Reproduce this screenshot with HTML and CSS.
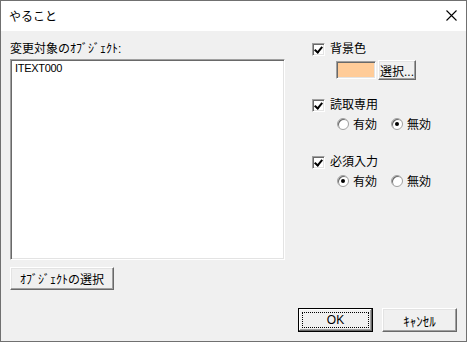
FILE: index.html
```html
<!DOCTYPE html>
<html lang="ja">
<head>
    <meta charset="UTF-8">
    <title>やること</title>
    <link rel="stylesheet" href="styles.css">
</head>
<body>
    <div class="window">
        <div class="titlebar">
            <span class="title">やること</span>
            <svg class="close" width="11" height="11" viewBox="0 0 11 11">
                <path d="M0.5 0.5 L10.5 10.5 M10.5 0.5 L0.5 10.5" stroke="#000" stroke-width="1.1" fill="none"/>
            </svg>
        </div>

        <div class="content">
            <div class="main">
                <!-- left: target objects -->
                <div class="left">
                    <div class="label">変更対象のｵﾌﾞｼﾞｪｸﾄ:</div>
                    <div class="listbox">
                        <div class="item">ITEXT000</div>
                    </div>
                    <button class="btn btn-select">ｵﾌﾞｼﾞｪｸﾄの選択</button>
                </div>

                <!-- right: options -->
                <div class="right">
                    <label class="check-row">
                        <span class="checkbox checked"></span>背景色
                    </label>
                    <div class="color-row">
                        <span class="swatch"></span>
                        <button class="btn btn-pick">選択...</button>
                    </div>

                    <label class="check-row row-gap1">
                        <span class="checkbox checked"></span>読取専用
                    </label>
                    <div class="radio-row">
                        <label class="radio-item"><span class="radio"></span>有効</label>
                        <label class="radio-item"><span class="radio on"></span>無効</label>
                    </div>

                    <label class="check-row row-gap2">
                        <span class="checkbox checked"></span>必須入力
                    </label>
                    <div class="radio-row">
                        <label class="radio-item"><span class="radio on"></span>有効</label>
                        <label class="radio-item"><span class="radio"></span>無効</label>
                    </div>
                </div>
            </div>

            <div class="footer">
                <button class="btn btn-ok"><span class="focus">OK</span></button>
                <button class="btn btn-cancel">ｷｬﾝｾﾙ</button>
            </div>
        </div>
    </div>
</body>
</html>
```

FILE: styles.css
```css
* {
    box-sizing: border-box;
}
body {
    margin: 0;
    font-family: "Liberation Sans", "Noto Sans CJK JP", sans-serif;
    font-size: 12px;
    color: #000;
    background: #fff;
}
.window {
    width: 467px;
    height: 342px;
    border: 1px solid #707070;
    display: flex;
    flex-direction: column;
}
.titlebar {
    height: 30px;
    background: #fff;
    display: flex;
    align-items: center;
    justify-content: space-between;
    padding: 0 9px 1px 8px;
}
.title {
    font-family: "Noto Sans CJK JP", sans-serif;
    font-size: 12px;
}
.close {
    display: block;
    margin-top: -1px;
}
.content {
    flex: 1;
    background: #f0f0f0;
    display: flex;
    flex-direction: column;
}
.main {
    display: flex;
    padding: 10px 0 0 9px;
}
.left {
    width: 275px;
}
.label {
    height: 16px;
    line-height: 16px;
    margin-bottom: 2px;
}
.listbox {
    height: 201px;
    background: #fff;
    border: 1px solid;
    border-color: #a0a0a0 #fff #fff #a0a0a0;
    box-shadow: inset 1px 1px #696969, inset -1px -1px #e3e3e3;
    padding: 2px 4px;
}
.item {
    font-size: 11px;
    line-height: 13px;
    letter-spacing: -0.3px;
}
.btn {
    font-family: "Liberation Sans", "Noto Sans CJK JP", sans-serif;
    font-size: 12px;
    color: #000;
    background: #f0f0f0;
    border: 1px solid;
    border-color: #fff #696969 #696969 #fff;
    box-shadow: inset -1px -1px #a0a0a0, inset 1px 1px #e3e3e3;
    padding: 0;
    display: flex;
    align-items: center;
    justify-content: center;
}
.btn-select {
    width: 104px;
    height: 23px;
    margin-top: 7px;
}
.right {
    margin-left: 27px;
    width: 150px;
}
.check-row {
    display: flex;
    align-items: center;
    height: 17px;
    line-height: 17px;
}
.checkbox {
    width: 13px;
    height: 13px;
    margin-right: 5px;
    background: #fff;
    border: 1px solid;
    border-color: #a0a0a0 #fff #fff #a0a0a0;
    box-shadow: inset 1px 1px #696969, inset -1px -1px #e3e3e3;
    position: relative;
}
.checkbox.checked::after {
    content: "";
    position: absolute;
    left: 3px;
    top: 1px;
    width: 3px;
    height: 6px;
    border: solid #000;
    border-width: 0 2px 2px 0;
    transform: rotate(40deg);
}
.color-row {
    display: flex;
    align-items: center;
    gap: 2px;
    margin-left: 24px;
    margin-top: 2px;
    height: 20px;
}
.swatch {
    width: 40px;
    height: 18px;
    background: #ffcc99;
    border: 1px solid;
    border-color: #a0a0a0 #fff #fff #a0a0a0;
    box-shadow: inset 1px 1px #696969, inset -1px -1px #e3e3e3;
}
.btn-pick {
    width: 38px;
    height: 20px;
}
.row-gap1 {
    margin-top: 17px;
}
.row-gap2 {
    margin-top: 22px;
}
.radio-row {
    display: flex;
    margin-left: 25px;
    margin-top: 1px;
    height: 17px;
}
.radio-item {
    display: flex;
    align-items: center;
    width: 54px;
}
.radio {
    width: 12px;
    height: 12px;
    border-radius: 50%;
    margin-right: 4px;
    background: #fff;
    border: 1px solid #a0a0a0;
    box-shadow: inset 1px 1px #696969;
    position: relative;
}
.radio.on::after {
    content: "";
    position: absolute;
    left: 3px;
    top: 3px;
    width: 4px;
    height: 4px;
    border-radius: 50%;
    background: #000;
}
.footer {
    margin-top: auto;
    display: flex;
    justify-content: flex-end;
    gap: 9px;
    padding: 0 9px 9px 0;
}
.btn-ok,
.btn-cancel {
    width: 75px;
    height: 24px;
}
.btn-cancel {
    font-size: 13px;
}
.btn-ok {
    border: 1px solid #000;
    box-shadow: inset -1px -1px #696969, inset 1px 1px #fff, inset -2px -2px #a0a0a0;
    padding: 3px;
}
.focus {
    display: flex;
    align-items: center;
    justify-content: center;
    width: 100%;
    height: 100%;
    border: 1px dotted #000;
}
```
